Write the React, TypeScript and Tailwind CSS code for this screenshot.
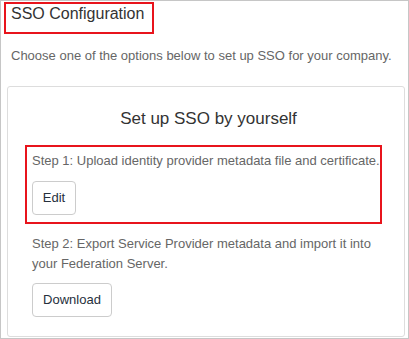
import React from 'react';

const StepButton = ({ label, width }: { label: string; width: string }) => (
    <button
        className={`${width} h-[34px] border border-[#cccccc] rounded-[4px] bg-white text-[13px] leading-[20px] text-[#26303c] text-center`}
    >
        {label}
    </button>
);

export default function App() {
    return (
        <div className="w-[409px] h-[339px] border border-[#c6c6c6] bg-white flex flex-col font-['Liberation_Sans',Arial,sans-serif]">
            {/* Page title, highlighted */}
            <div className="ml-[3px] mt-[1px] w-[150px] h-[32px] border-2 border-[#e8141c] pl-[5px] pt-[1px]">
                <h1 className="text-[16px] leading-[18px] text-[#333333]">SSO Configuration</h1>
            </div>

            <p className="mt-[12px] ml-[10px] text-[13px] leading-[20px] text-[#666666]">
                Choose one of the options below to set up SSO for your company.
            </p>

            {/* Setup card */}
            <div className="mt-[20px] ml-[6px] mb-[1px] w-[398px] flex-1 border border-[#dddddd] rounded-[3px] pt-[20px] pl-[17px]">
                <h2 className="w-[367px] text-center text-[17px] leading-[24px] text-[#333333]">Set up SSO by yourself</h2>

                <div className="mt-[14px] w-[357px] h-[79px] border-2 border-[#e8141c] pl-[5px] pt-[4px]">
                    <p className="text-[13px] leading-[20px] text-[#666666] whitespace-nowrap">
                        Step 1: Upload identity provider metadata file and certificate.
                    </p>
                    <div className="mt-[10px]">
                        <StepButton label="Edit" width="w-[44px]" />
                    </div>
                </div>

                <div className="mt-[10px] pl-[7px] w-[357px]">
                    <p className="text-[13px] leading-[20px] text-[#666666]">
                        Step 2: Export Service Provider metadata and import it into your Federation Server.
                    </p>
                    <div className="mt-[9px]">
                        <StepButton label="Download" width="w-[80px]" />
                    </div>
                </div>
            </div>
        </div>
    );
}
